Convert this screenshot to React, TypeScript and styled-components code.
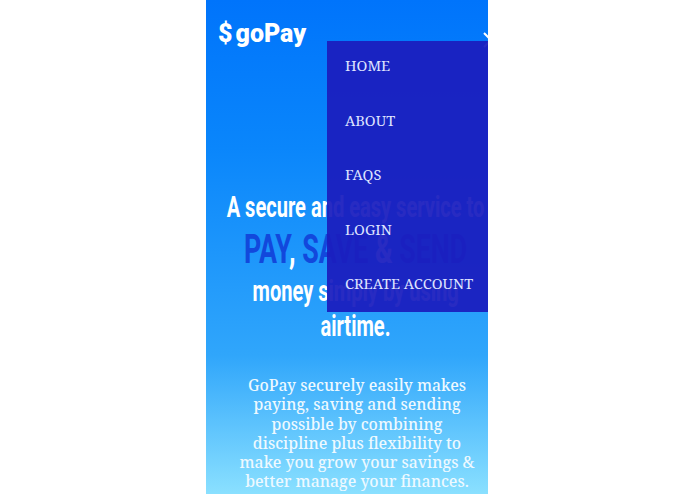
import React from "react";
import styled, { createGlobalStyle } from "styled-components";

const Global = createGlobalStyle`
  html, body { margin: 0; padding: 0; background: #fff; height: 494px; overflow: hidden; }
`;

const Page = styled.div`
  display: flex;
  justify-content: center;
  padding-right: 1px;
  height: 494px;
  overflow: hidden;
`;

const Phone = styled.main`
  position: relative;
  width: 282px;
  height: 494px;
  overflow: hidden;
  background: linear-gradient(180deg, #0074fb 0%, #0a86fb 30%, #30a6fb 72%, #8ae0ff 100%);
`;

const Header = styled.header`
  display: flex;
  align-items: center;
  height: 66px;
  padding-left: 12px;
`;

const Logo = styled.div`
  display: flex;
  align-items: center;
  gap: 3px;
  color: #fff;
  font: 900 25px/1 Roboto, sans-serif;
`;

const Close = styled.svg`
  position: absolute;
  top: 32px;
  left: 277px;
  width: 16px;
  height: 16px;
`;

const Menu = styled.nav`
  position: absolute;
  top: 41px;
  left: 121px;
  width: 161px;
  height: 271px;
  box-sizing: border-box;
  padding-left: 18px;
  display: flex;
  flex-direction: column;
  background: rgba(27, 30, 190, 0.94);
`;

const MenuItem = styled.a`
  display: flex;
  flex: none;
  align-items: center;
  box-sizing: border-box;
  height: 54.5px;
  padding-bottom: 5px;
  color: #dfe3ff;
  font: 400 14.6px/1 "Noto Serif", "DejaVu Serif", serif;
  white-space: nowrap;
`;

const Hero = styled.section`
  display: flex;
  flex-direction: column;
  align-items: center;
  padding: 124px 0 0 17px;
  text-align: center;
`;

const Headline = styled.h1`
  display: flex;
  flex-direction: column;
  align-items: center;
  margin: 0;
  color: #fff;
  font: 700 29.5px/35px Roboto, sans-serif;
`;

const Line = styled.span`
  white-space: nowrap;
  transform: scaleX(0.68);
`;

const AccentLine = styled.span`
  white-space: nowrap;
  font-size: 40px;
  line-height: 49px;
  transform: scaleX(0.67);
`;

const Word = styled.span`
  color: #1248dc;
`;

const Body = styled.p`
  margin: 32px 0 0 3px;
  width: 240px;
  color: #eef9ff;
  font: 500 15.8px/19.3px "Noto Serif", "DejaVu Serif", serif;
`;

export default function App() {
  return (
    <>
      <Global />
      <Page>
        <Phone>
          <Header>
            <Logo>
              <span>$</span>
              goPay
            </Logo>
          </Header>
          <Hero>
            <Headline>
              <Line>A secure and easy service to</Line>
              <AccentLine>
                <Word>PAY</Word>, <Word>SAVE</Word> &amp; <Word>SEND</Word>
              </AccentLine>
              <Line>money simply by using</Line>
              <Line>airtime.</Line>
            </Headline>
            <Body>
              GoPay securely easily makes paying, saving and sending possible by combining
              discipline plus flexibility to make you grow your savings &amp; better manage your finances.
            </Body>
          </Hero>
          <Close viewBox="0 0 16 16">
            <path d="M1 1 L15 15 M15 1 L1 15" stroke="#fff" strokeWidth="2" fill="none" />
          </Close>
          <Menu>
            <MenuItem>HOME</MenuItem>
            <MenuItem>ABOUT</MenuItem>
            <MenuItem>FAQS</MenuItem>
            <MenuItem>LOGIN</MenuItem>
            <MenuItem>CREATE ACCOUNT</MenuItem>
          </Menu>
        </Phone>
      </Page>
    </>
  );
}
